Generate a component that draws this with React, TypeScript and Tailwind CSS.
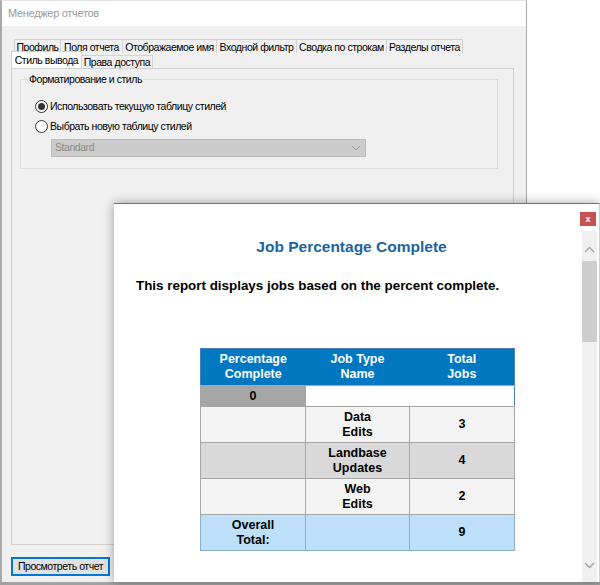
import React from "react";

const ui = { fontFamily: '"Liberation Sans", Arial, sans-serif' };
const report = { fontFamily: '"Liberation Sans", Arial, sans-serif' };

const row1 = [
  { label: "Профиль", w: "w-[47px]" },
  { label: "Поля отчета", w: "w-[63px]" },
  { label: "Отображаемое имя", w: "w-[95px]" },
  { label: "Входной фильтр", w: "w-[81px]" },
  { label: "Сводка по строкам", w: "w-[91px]" },
  { label: "Разделы отчета", w: "w-[77px]" },
];

const uiText = "text-[10.5px] tracking-[-0.45px] leading-none whitespace-nowrap";

function Radio({ checked, label }: { checked?: boolean; label: string }) {
  return (
    <div className="flex items-center gap-[2px] h-[14px]">
      <span className="w-[13px] h-[13px] rounded-full border border-[#333] bg-white flex items-center justify-center">
        {checked && <span className="w-[7px] h-[7px] rounded-full bg-[#333]" />}
      </span>
      <span className={`${uiText} text-black`}>{label}</span>
    </div>
  );
}

function ReportDialog() {
  const cell = "border border-[#a6a6a6] text-center align-middle font-bold leading-[15px]";
  return (
    <div
      className="absolute left-[114px] top-[203px] w-[486px] h-[379px] bg-white border-t border-[#1e88e5] border-r border-r-[#d0d0d0] shadow-[0_0_10px_rgba(0,0,0,0.35)] flex"
      style={report}
    >
      <button className="absolute right-[3px] top-[8px] w-[16px] h-[14px] bg-[#c75050] text-white text-[9px] font-bold leading-none flex items-center justify-center">
        x
      </button>
      <div className="flex-1 flex flex-col">
        <h1 className="pt-[34px] pl-[7px] text-center text-[15.5px] font-bold text-[#1b64a1] leading-[18px]">
          Job Percentage Complete
        </h1>
        <p className="mt-[22px] ml-[22px] text-[13.4px] font-bold text-black leading-[16px]">
          This report displays jobs based on the percent complete.
        </p>
        <table className="mt-[54px] ml-[86px] w-[314px] border-collapse border border-[#4a7ebb] text-[12.5px] table-fixed">
          <colgroup>
            <col className="w-[105px]" />
            <col className="w-[104px]" />
            <col className="w-[105px]" />
          </colgroup>
          <thead>
            <tr className="h-[37px] bg-[#0077c1] text-white">
              <th className="text-center font-bold leading-[15px]">Percentage<br />Complete</th>
              <th className="text-center font-bold leading-[15px]">Job Type<br />Name</th>
              <th className="text-center font-bold leading-[15px]">Total<br />Jobs</th>
            </tr>
          </thead>
          <tbody className="text-black">
            <tr className="h-[21px]">
              <td className={`${cell} bg-[#a6a6a6]`}>0</td>
              <td colSpan={2} className="bg-white border-y border-[#a6a6a6]" />
            </tr>
            <tr className="h-[36px] bg-[#f4f4f4]">
              <td className={cell} />
              <td className={cell}>Data<br />Edits</td>
              <td className={cell}>3</td>
            </tr>
            <tr className="h-[36px] bg-[#d9d9d9]">
              <td className={cell} />
              <td className={cell}>Landbase<br />Updates</td>
              <td className={cell}>4</td>
            </tr>
            <tr className="h-[36px] bg-[#f4f4f4]">
              <td className={cell} />
              <td className={cell}>Web<br />Edits</td>
              <td className={cell}>2</td>
            </tr>
            <tr className="h-[36px] bg-[#bde0f8]">
              <td className="border border-[#8fb0cc] text-center font-bold leading-[15px]">Overall<br />Total:</td>
              <td className="border border-[#8fb0cc]" />
              <td className="border border-[#8fb0cc] text-center font-bold">9</td>
            </tr>
          </tbody>
        </table>
      </div>
      {/* scrollbar */}
      <div className="w-[15px] mt-[27px] mr-[2px] bg-[#f0f0f0] flex flex-col items-center">
        <svg width="11" height="7" viewBox="0 0 11 7" className="mt-[15px]">
          <path d="M1 6 L5.5 1.5 L10 6" fill="none" stroke="#a3a3a3" strokeWidth="1.3" />
        </svg>
        <div className="mt-[8px] w-full h-[81px] bg-[#cdcdcd]" />
        <div className="flex-1" />
        <svg width="11" height="7" viewBox="0 0 11 7" className="mb-[13px]">
          <path d="M1 1 L5.5 5.5 L10 1" fill="none" stroke="#a3a3a3" strokeWidth="1.3" />
        </svg>
      </div>
    </div>
  );
}

export default function App() {
  return (
    <div className="relative w-[600px] h-[585px] bg-white overflow-hidden flex flex-col" style={ui}>
      <div className="flex-1 flex">
        {/* main window */}
        <div className="w-[527px] h-full border-l-2 border-r border-t border-[#a9a9a9] border-t-[#e3e3e3] flex flex-col shadow-[4px_0_8px_rgba(0,0,0,0.12)]">
          <div className="h-[25px] bg-white flex items-center pl-[6px]">
            <span className="text-[11px] tracking-[-0.3px] text-[#9a9a9a] whitespace-nowrap">Менеджер отчетов</span>
          </div>
          <div className="flex-1 bg-[#f0f0f0] pl-[9px] pr-[12px] pt-[13px] flex flex-col">
            {/* tab rows */}
            <div className="flex ml-[3px] h-[14px]">
              {row1.map((t) => (
                <div
                  key={t.label}
                  className={`${t.w} h-[14px] border border-b-0 border-[#d2d2d2] -ml-px first:ml-0 bg-[#f0f0f0] flex items-start justify-center pt-[2px] text-black ${uiText}`}
                >
                  {t.label}
                </div>
              ))}
            </div>
            <div className="flex items-end h-[17px] -mt-[2px]">
              <div className={`w-[71px] h-[17px] border border-b-0 border-[#d2d2d2] bg-white flex items-center justify-center text-black ${uiText}`}>
                Стиль вывода
              </div>
              <div className={`w-[71px] h-[13px] border border-b-0 border-l-0 border-[#d2d2d2] bg-[#f0f0f0] flex items-center justify-center text-black ${uiText}`}>
                Права доступа
              </div>
            </div>
            {/* tab panel */}
            <div className="h-[477px] border border-[#d2d2d2] bg-[#f0f0f0] px-[8px]">
              <fieldset className="mt-[5px] mr-[7px] h-[95px] border border-[#dcdcdc] px-[14px] pt-[15px]">
                <legend className={`-ml-[7px] px-[1px] text-black ${uiText}`}>
                  Форматирование и стиль
                </legend>
                <div className="flex flex-col gap-[6px]">
                  <Radio checked label="Использовать текущую таблицу стилей" />
                  <Radio label="Выбрать новую таблицу стилей" />
                </div>
                <div className="mt-[5px] ml-[16px] w-[315px] h-[18px] bg-[#cccccc] border border-[#bcbcbc] flex items-center justify-between px-[3px]">
                  <span className={`text-[#8a8a8a] ${uiText}`}>Standard</span>
                  <svg width="10" height="6" viewBox="0 0 10 6" className="mr-[1px]">
                    <path d="M1 1 L5 5 L9 1" fill="none" stroke="#9c9c9c" strokeWidth="1" />
                  </svg>
                </div>
              </fieldset>
            </div>
            <div className="mt-[8px]">
              <button className={`w-[99px] h-[19px] border-2 border-[#0078d7] bg-[#e1e1e1] text-black ${uiText}`}>
                Просмотреть отчет
              </button>
            </div>
          </div>
        </div>
        <div className="flex-1 bg-white" />
      </div>
      <div className="h-[3px] bg-[#a2a2a2]" />
      <ReportDialog />
    </div>
  );
}
